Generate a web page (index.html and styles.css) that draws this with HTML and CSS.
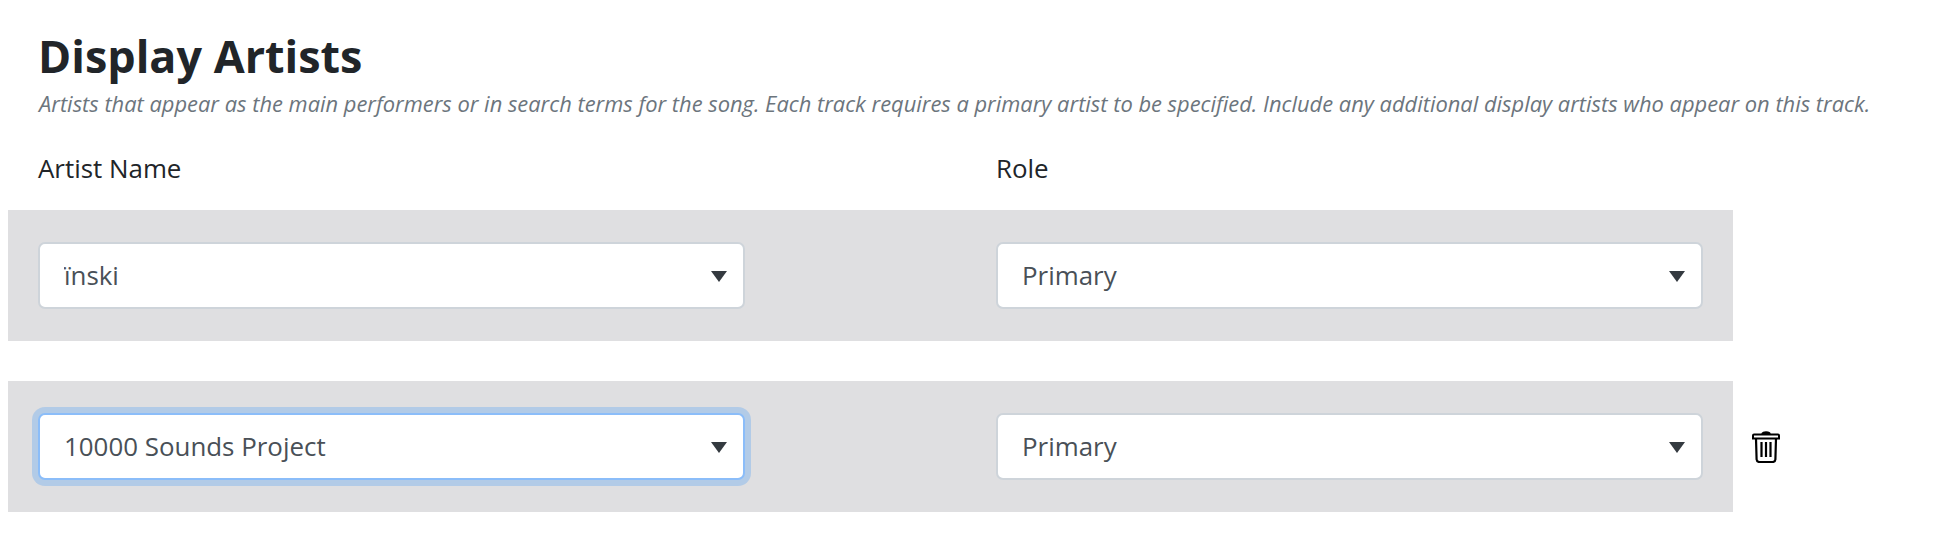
FILE: index.html
```html
<!DOCTYPE html>
<html lang="en">
<head>
  <meta charset="UTF-8" />
  <title>Display Artists</title>
  <link rel="stylesheet" href="styles.css">
</head>
<body>
  <h2 class="title">Display Artists</h2>
  <p class="help">Artists that appear as the main performers or in search terms for the song. Each track requires a primary artist to be specified. Include any additional display artists who appear on this track.</p>

  <div class="labels">
    <label>Artist Name</label>
    <label>Role</label>
  </div>

  <div class="row">
    <div class="band">
      <div class="select-wrap">
        <select><option>ïnski</option></select>
        <span class="caret"></span>
      </div>
      <div class="select-wrap">
        <select><option>Primary</option></select>
        <span class="caret"></span>
      </div>
    </div>
  </div>

  <div class="row">
    <div class="band">
      <div class="select-wrap">
        <select class="focused"><option>10000 Sounds Project</option></select>
        <span class="caret"></span>
      </div>
      <div class="select-wrap">
        <select><option>Primary</option></select>
        <span class="caret"></span>
      </div>
    </div>
    <!-- delete button -->
    <svg class="trash" viewBox="0 0 28 32" width="28" height="32" fill="none" stroke="#000">
      <path d="M10.5 3 C10.5 .8 17.5 .8 17.5 3" stroke-width="2.4" fill="#000"/>
      <path d="M1 7.5 V4.5 Q1 3.5 2 3.5 H26 Q27 3.5 27 4.5 V7.5 Z" stroke-width="2"/>
      <path d="M4 7.5 L4.6 28.5 Q4.8 31 7.5 31 H20.5 Q23.2 31 23.4 28.5 L24 7.5" stroke-width="2.2"/>
      <path d="M9.5 11 V26 M14 11 V26 M18.5 11 V26" stroke-width="2.2"/>
    </svg>
  </div>
</body>
</html>
```

FILE: styles.css
```css
body {
  margin: 0;
  padding: 30px 0 0 8px;
  font-family: "Open Sans", sans-serif;
  background-color: #fff;
  color: #212529;
}
.title {
  margin: 0 0 0 30px;
  font-size: 44.9px;
  line-height: 52px;
  font-weight: 700;
}
.help {
  margin: 8px 0 0 31px;
  font-size: 21.88px;
  line-height: 28px;
  font-style: italic;
  color: #6c757d;
  white-space: nowrap;
}
.labels {
  display: grid;
  grid-template-columns: 707px 707px;
  column-gap: 251px;
  width: 1725px;
  box-sizing: border-box;
  padding: 0 30px;
  margin-top: 33px;
  height: 59px;
  font-size: 25.9px;
  line-height: 34px;
}
.row {
  display: flex;
  align-items: center;
  margin-bottom: 40px;
}
.band {
  display: grid;
  grid-template-columns: 707px 707px;
  column-gap: 251px;
  width: 1725px;
  height: 131px;
  box-sizing: border-box;
  padding: 32px 30px;
  background-color: #dfdfe1;
}
.select-wrap {
  position: relative;
  height: 67px;
}
select {
  appearance: none;
  width: 100%;
  height: 100%;
  padding: 0 50px 2px 24px;
  border: 2px solid #ced4da;
  border-radius: 7px;
  background-color: #fff;
  font-family: inherit;
  font-size: 25.9px;
  color: #495057;
}
select.focused {
  border-color: #8bbdf9;
  box-shadow: 0 0 0 6px rgba(0, 123, 255, 0.2);
}
.caret {
  position: absolute;
  right: 18px;
  top: 29px;
  border-left: 8px solid transparent;
  border-right: 8px solid transparent;
  border-top: 11px solid #343a40;
}
.trash {
  margin-left: 19px;
}
```
